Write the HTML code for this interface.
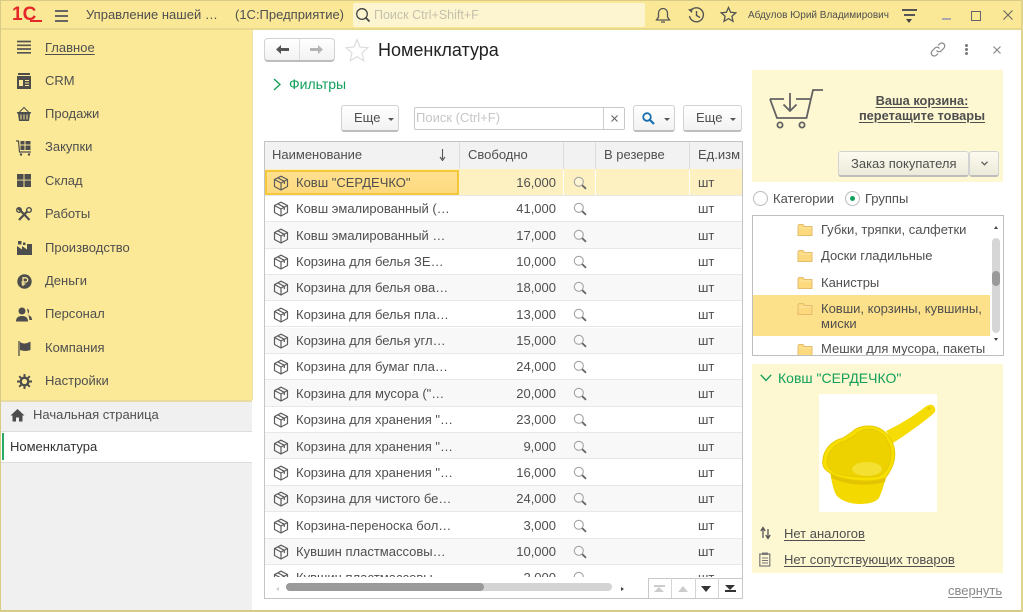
<!DOCTYPE html>
<html><head><meta charset="utf-8">
<style>
html,body{margin:0;padding:0}
body{width:1023px;height:612px;position:relative;overflow:hidden;background:#fff;font-family:"Liberation Sans",sans-serif;font-size:13px;color:#4f4f4f;filter:blur(.35px)}
div,a,span.a,svg.a{position:absolute}
.t{white-space:nowrap;line-height:16px}
.u{text-decoration:underline;text-underline-offset:2px}
.btn{background:linear-gradient(#fff,#f2f2f2);border:1px solid #d2d2d2;border-bottom:2px solid #bdbdbd;border-radius:3px;box-sizing:border-box}
.caret{width:0;height:0;border-left:3px solid transparent;border-right:3px solid transparent;border-top:3px solid #555}
.hd{top:142px;height:27px;background:#f2f2f2;border-right:1px solid #dcdcdc;box-sizing:border-box}
.r{left:265px;width:477px;height:26px;border-bottom:1px solid #e8e8e8;box-sizing:border-box}
.alt{background:#f8f8f8}
</style></head><body>
<svg width="0" height="0" style="position:absolute"><defs>
<symbol id="box" viewBox="0 0 16 16"><g fill="none" stroke="#5c5c5c" stroke-width="1.200" stroke-linejoin="round"><path d="M8 1.200 14.500 4.500V11.500L8 15 1.500 11.500V4.500Z"/><path d="M1.500 4.500 8 8 14.500 4.500M8 8V15M4.800 2.900 11.300 6.300V9"/></g></symbol>
<symbol id="lens" viewBox="0 0 14 14"><circle cx="5.800" cy="5.800" r="4.500" fill="#fff" fill-opacity=".3" stroke="#a2a2a2" stroke-width="1.100"/><path d="M9.200 9.200 13 12.800" stroke="#666" stroke-width="1.800"/></symbol>
<symbol id="fold" viewBox="0 0 16 14"><path d="M1 3V12.500H15V3.500H7.500L6 1.500H2Z" fill="#fcd97c" stroke="#e4bd6c"/><path d="M1.500 5H14.500" stroke="#fbe6a8"/></symbol>
</defs></svg>

<!-- title bar -->
<div style="left:0;top:0;width:1023px;height:30px;background:#fae896;border-bottom:2px solid #e6d88c;box-sizing:border-box"></div>
<div style="left:0;top:0;width:1023px;height:1px;background:#d8cb85"></div>
<div class="t" style="left:12px;top:5px;font-size:19px;font-weight:bold;color:#e4282a;line-height:20px">1С</div>
<div style="left:30px;top:20px;width:12px;height:2px;background:#e4282a"></div>
<div style="left:55px;top:10px;width:13px;height:1.500px;background:#666"></div>
<div style="left:55px;top:15px;width:13px;height:1.500px;background:#666"></div>
<div style="left:55px;top:20px;width:13px;height:1.500px;background:#666"></div>
<div class="t" style="left:86px;top:7px;">Управление нашей …</div>
<div class="t" style="left:235px;top:7px;">(1С:Предприятие)</div>
<div style="left:353px;top:3px;width:292px;height:24px;background:#fdf5cf;border-radius:2px"></div>
<svg class="a" style="left:355px;top:7px" width="16" height="16" viewBox="0 0 16 16"><circle cx="7" cy="7" r="5.300" fill="none" stroke="#444" stroke-width="1.300"/><path d="M11 11 14.500 14.500" stroke="#444" stroke-width="1.800"/></svg>
<div class="t" style="left:374px;top:7px;font-size:12.500px;color:#c4c0ac">Поиск Ctrl+Shift+F</div>
<svg class="a" style="left:655px;top:6px" width="16" height="18" viewBox="0 0 16 18"><path d="M1.500 14H14.500L12.500 11V7A4.500 4.500 0 0 0 3.500 7V11ZM6 16H10" fill="none" stroke="#555" stroke-width="1.300"/></svg>
<svg class="a" style="left:687px;top:6px" width="18" height="18" viewBox="0 0 18 18"><path d="M3.500 5A7 7 0 1 1 2.500 10M9.500 5V9.500L13 11.500" fill="none" stroke="#555" stroke-width="1.400"/><path d="M1 3.500 5.500 2.500 5 7Z" fill="#555"/></svg>
<svg class="a" style="left:720px;top:6px" width="17" height="17" viewBox="0 0 17 17"><path d="M8.500 1.500 10.600 6.300 15.800 6.800 11.900 10.200 13 15.300 8.500 12.600 4 15.300 5.100 10.200 1.200 6.800 6.400 6.300Z" fill="none" stroke="#555" stroke-width="1.300"/></svg>
<div class="t" style="left:748px;top:8px;font-size:10px">Абдулов Юрий Владимирович</div>
<div style="left:902px;top:9px;width:15px;height:1.500px;background:#555"></div>
<div style="left:904px;top:14px;width:11px;height:1.500px;background:#555"></div>
<div style="left:906px;top:19px;border-left:3.500px solid transparent;border-right:3.500px solid transparent;border-top:4px solid #444"></div>
<div style="left:942px;top:18px;width:9px;height:2px;background:#aaa"></div>
<div style="left:971px;top:11px;width:8px;height:8px;border:1.300px solid #666"></div>
<svg class="a" style="left:1003px;top:10px" width="10" height="10" viewBox="0 0 10 10"><path d="M.5.500 9.500 9.500M9.500.500.5 9.500" stroke="#666" stroke-width="1.100"/></svg>

<!-- sidebar -->
<div style="left:0;top:30px;width:252px;height:370px;background:#fbe998;border-right:1px solid #ece3b0"></div>
<div style="left:0;top:400px;width:252px;height:32px;background:#f0f0f0;border-top:2px solid #e8dca0;box-sizing:border-box"></div>
<div style="left:0;top:431px;width:252px;height:32px;background:#fff;border-top:1px solid #ddd;border-bottom:1px solid #ddd;box-sizing:border-box"></div>
<div style="left:0;top:463px;width:252px;height:149px;background:#f0f0f0"></div>
<div style="left:2px;top:433px;width:2px;height:27px;background:#2aa866"></div>
<div style="left:0;top:0;width:1px;height:612px;background:#d8cb85"></div>

<div class="t u" style="left:45px;top:40px">Главное</div>
<div class="t" style="left:45px;top:73px">CRM</div>
<div class="t" style="left:45px;top:106px">Продажи</div>
<div class="t" style="left:45px;top:139px">Закупки</div>
<div class="t" style="left:45px;top:173px">Склад</div>
<div class="t" style="left:45px;top:206px">Работы</div>
<div class="t" style="left:45px;top:240px">Производство</div>
<div class="t" style="left:45px;top:273px">Деньги</div>
<div class="t" style="left:45px;top:306px">Персонал</div>
<div class="t" style="left:45px;top:340px">Компания</div>
<div class="t" style="left:45px;top:373px">Настройки</div>
<div class="t" style="left:33px;top:407px">Начальная страница</div>
<div class="t" style="left:10px;top:439px;color:#333">Номенклатура</div>

<svg class="a" style="left:17px;top:40px" width="14" height="14" viewBox="0 0 14 14"><path d="M0 1.500H14M0 5.300H14M0 9H14M0 12.800H14" stroke="#555" stroke-width="1.700"/></svg>
<svg class="a" style="left:16px;top:73px" width="16" height="16" viewBox="0 0 16 16"><path d="M2 0H14V2H2Z M1 3H15V16H1Z" fill="#4d4d4d"/><rect x="3" y="7" width="4" height="6" fill="#fbe998"/><path d="M9 7.500H13M9 10H13M9 12.500H13" stroke="#fbe998"/></svg>
<svg class="a" style="left:16px;top:106px" width="16" height="16" viewBox="0 0 16 16"><path d="M1 6H15V7.500H14L13 15H3L2 7.500H1Z" fill="#4d4d4d"/><path d="M3.500 6 8 1.500 12.500 6" fill="none" stroke="#4d4d4d"/><path d="M5 8.500V13.500M8 8.500V13.500M11 8.500V13.500" stroke="#fbe998"/></svg>
<svg class="a" style="left:16px;top:140px" width="16" height="16" viewBox="0 0 16 16"><path d="M0 1H2.500L3.500 12H15" fill="none" stroke="#4d4d4d" stroke-width="1.200"/><path d="M4.500 1H8.500V4.500H4.500ZM9.500 1H14.500V4.500H9.500ZM4.500 5.500H8.500V10H4.500ZM9.500 5.500H14.500V10H9.500Z" fill="#4d4d4d"/><circle cx="5" cy="14.500" r="1.200" fill="#4d4d4d"/><circle cx="13" cy="14.500" r="1.200" fill="#4d4d4d"/></svg>
<svg class="a" style="left:17px;top:174px" width="14" height="13" viewBox="0 0 15 14"><path d="M0 0H7V6H0ZM8 0H15V6H8ZM0 7H7V14H0ZM8 7H15V14H8Z" fill="#4d4d4d"/></svg>
<svg class="a" style="left:16px;top:207px" width="16" height="15" viewBox="0 0 16 15"><path d="M2 1 13.500 13M14 1.500 3 13" stroke="#4d4d4d" stroke-width="2.200"/><circle cx="3" cy="3" r="2.300" fill="none" stroke="#4d4d4d" stroke-width="1.400"/><circle cx="13" cy="3" r="2.300" fill="#fbe998" stroke="#4d4d4d" stroke-width="1.400"/></svg>
<svg class="a" style="left:17px;top:241px" width="15" height="14" viewBox="0 0 15 14"><path d="M0 14V5L5 8.500V5L10 8.500V3H15V14ZM1 0H4.500V3.500H1ZM6 1.500H8.500V4H6Z" fill="#4d4d4d"/></svg>
<svg class="a" style="left:17px;top:274px" width="15" height="15" viewBox="0 0 15 15"><circle cx="7.500" cy="7.500" r="7.200" fill="#4d4d4d"/><path d="M6 12V3.800H8.600A2 2 0 0 1 8.600 8H4.500M4.500 10H8.500" fill="none" stroke="#fbe998" stroke-width="1.300"/></svg>
<svg class="a" style="left:16px;top:307px" width="16" height="15" viewBox="0 0 16 15"><circle cx="6" cy="4" r="3.500" fill="#4d4d4d"/><path d="M0 14.500C0 10 3 9 6 9S12 10 12 14.500Z" fill="#4d4d4d"/><path d="M11 1.500A3 3 0 0 1 11.500 7L13 8.500C15 9 16 11 16 13H13.500" fill="#4d4d4d"/></svg>
<svg class="a" style="left:18px;top:341px" width="14" height="15" viewBox="0 0 14 15"><path d="M1 0V15" stroke="#4d4d4d" stroke-width="1.300"/><path d="M2 1C5 3 8 3 12.500 0.500V9C8 10.500 5 10 2 9Z" fill="#4d4d4d"/></svg>
<svg class="a" style="left:17px;top:374px" width="15" height="15" viewBox="0 0 15 15"><circle cx="7.500" cy="7.500" r="3.800" fill="none" stroke="#4d4d4d" stroke-width="2.400"/><path d="M7.500 0V3M7.500 12V15M0 7.500H3M12 7.500H15M2.200 2.200 4.300 4.300M10.700 10.700 12.800 12.800M12.800 2.200 10.700 4.300M4.300 10.700 2.200 12.800" stroke="#4d4d4d" stroke-width="2"/></svg>
<svg class="a" style="left:10px;top:408px" width="15" height="14" viewBox="0 0 15 14"><path d="M7.500 1 14.500 7.500H12.500V13.500H9V9.500H6V13.500H2.500V7.500H0.500Z" fill="#4d4d4d"/></svg>

<!-- toolbar -->
<div class="btn" style="left:264px;top:38px;width:71px;height:24px;border-radius:4px"></div>
<div style="left:299px;top:39px;width:1px;height:21px;background:#ddd"></div>
<svg class="a" style="left:275px;top:44px" width="15" height="11" viewBox="0 0 15 11"><path d="M1 5.500 6 1V4H14V7H6V10Z" fill="#555"/></svg>
<svg class="a" style="left:309px;top:44px" width="15" height="11" viewBox="0 0 15 11"><path d="M14 5.500 9 1V4H1V7H9V10Z" fill="#b5b5b5"/></svg>
<svg class="a" style="left:345px;top:38px" width="24" height="24" viewBox="0 0 24 24"><path d="M12 1.500 15 9 23 9.700 17 15 18.800 22.800 12 18.700 5.200 22.800 7 15 1 9.700 9 9Z" fill="#fff" stroke="#dadada" stroke-width="1.100"/></svg>
<div class="t" style="left:378px;top:40px;font-size:18px;line-height:21px;color:#222">Номенклатура</div>
<svg class="a" style="left:929px;top:41px" width="18" height="17" viewBox="0 0 18 17"><path d="M7.500 9.500A3 3 0 0 0 12 10L15 7A3 3 0 0 0 10.500 3L9 4.500M10.500 7.500A3 3 0 0 0 6 7L3 10A3 3 0 0 0 7.500 14L9 12.500" fill="none" stroke="#888" stroke-width="1.200"/></svg>
<div style="left:965px;top:44px;width:3px;height:3px;background:#777;border-radius:50%"></div>
<div style="left:965px;top:48px;width:3px;height:3px;background:#777;border-radius:50%"></div>
<div style="left:965px;top:52px;width:3px;height:3px;background:#777;border-radius:50%"></div>
<svg class="a" style="left:993px;top:45.500px" width="8" height="8" viewBox="0 0 8 8"><path d="M.5.500 7.500 7.500M7.500.500.5 7.500" stroke="#888" stroke-width="1.200"/></svg>

<svg class="a" style="left:273px;top:78px" width="8" height="13" viewBox="0 0 8 13"><path d="M1 1 7 6.500 1 12" fill="none" stroke="#12a05a" stroke-width="1.400"/></svg>
<div class="t" style="left:289px;top:76px;font-size:14px;color:#12a05a">Фильтры</div>

<!-- filter row -->
<div class="btn" style="left:341px;top:105px;width:58px;height:27px"></div>
<div class="t" style="left:354px;top:110px">Еще</div><div class="caret" style="left:388px;top:118px"></div>
<div style="left:414px;top:107px;width:211px;height:23px;border:1px solid #c8c8c8;border-radius:2px;box-sizing:border-box"></div>
<div style="left:603px;top:108px;width:1px;height:21px;background:#ccc"></div>
<div class="t" style="left:416px;top:110px;color:#c5c5c5">Поиск (Ctrl+F)</div>
<svg class="a" style="left:611px;top:115px" width="7" height="7" viewBox="0 0 7 7"><path d="M.5.500 6.500 6.500M6.500.500.5 6.500" stroke="#666" stroke-width="1.100"/></svg>
<div class="btn" style="left:633px;top:105px;width:42px;height:27px"></div>
<svg class="a" style="left:642px;top:112px" width="13" height="13" viewBox="0 0 13 13"><circle cx="5" cy="5" r="3.800" fill="none" stroke="#1a6fb0" stroke-width="1.800"/><path d="M8 8 12 12" stroke="#1a6fb0" stroke-width="2.200"/></svg>
<div class="caret" style="left:664px;top:118px"></div>
<div class="btn" style="left:683px;top:105px;width:59px;height:27px"></div>
<div class="t" style="left:696px;top:110px">Еще</div><div class="caret" style="left:730px;top:118px"></div>

<!-- table -->
<div style="left:264px;top:141px;width:479px;height:458px;border:1px solid #c4c4c4;box-sizing:border-box"></div>
<div class="hd" style="left:265px;width:195px"></div>
<div class="hd" style="left:460px;width:104px"></div>
<div class="hd" style="left:564px;width:32px"></div>
<div class="hd" style="left:596px;width:94px"></div>
<div class="hd" style="left:690px;width:52px;border-right:0"></div>
<div class="t" style="left:272px;top:147px">Наименование</div>
<svg class="a" style="left:438px;top:149px" width="9" height="12" viewBox="0 0 9 12"><path d="M4.500 0V10M2 8 4.500 11.500 7 8" fill="none" stroke="#555" stroke-width="1.100"/></svg>
<div class="t" style="left:468px;top:147px">Свободно</div>
<div class="t" style="left:604px;top:147px">В резерве</div>
<div class="t" style="left:698px;top:147px">Ед.изм</div>

<div class="r" style="top:169px;height:27px;background:#fdf1c2"></div>
<div style="left:265px;top:170px;width:194px;height:25px;border:2px solid #f5c73a;background:linear-gradient(#fee08f,#fdda7e);box-sizing:border-box"></div>
<div style="left:563px;top:170px;width:1px;height:25px;background:#fff"></div>
<div style="left:595px;top:170px;width:1px;height:25px;background:#fff"></div>
<div style="left:689px;top:170px;width:1px;height:25px;background:#fff"></div>
<div class="r" style="top:196px"></div>
<div class="r alt" style="top:222px;height:27px"></div>
<div class="r" style="top:249px"></div>
<div class="r alt" style="top:275px"></div>
<div class="r" style="top:301px"></div>
<div class="r alt" style="top:328px"></div>
<div class="r" style="top:354px"></div>
<div class="r alt" style="top:380px;height:27px"></div>
<div class="r" style="top:407px"></div>
<div class="r alt" style="top:433px"></div>
<div class="r" style="top:460px"></div>
<div class="r alt" style="top:486px"></div>
<div class="r" style="top:512px;height:27px"></div>
<div class="r alt" style="top:539px"></div>

<div class="t" style="left:296px;top:175px">Ковш "СЕРДЕЧКО"</div>
<div class="t" style="left:296px;top:201px">Ковш эмалированный (…</div>
<div class="t" style="left:296px;top:228px">Ковш эмалированный …</div>
<div class="t" style="left:296px;top:254px">Корзина для белья ЗЕ…</div>
<div class="t" style="left:296px;top:280px">Корзина для белья ова…</div>
<div class="t" style="left:296px;top:307px">Корзина для белья пла…</div>
<div class="t" style="left:296px;top:333px">Корзина для белья угл…</div>
<div class="t" style="left:296px;top:359px">Корзина для бумаг пла…</div>
<div class="t" style="left:296px;top:386px">Корзина для мусора ("…</div>
<div class="t" style="left:296px;top:412px">Корзина для хранения "…</div>
<div class="t" style="left:296px;top:439px">Корзина для хранения "…</div>
<div class="t" style="left:296px;top:465px">Корзина для хранения "…</div>
<div class="t" style="left:296px;top:491px">Корзина для чистого бе…</div>
<div class="t" style="left:296px;top:518px">Корзина-переноска бол…</div>
<div class="t" style="left:296px;top:544px">Кувшин пластмассовы…</div>

<div class="t" style="left:500px;width:56px;text-align:right;top:175px">16,000</div>
<div class="t" style="left:500px;width:56px;text-align:right;top:201px">41,000</div>
<div class="t" style="left:500px;width:56px;text-align:right;top:228px">17,000</div>
<div class="t" style="left:500px;width:56px;text-align:right;top:254px">10,000</div>
<div class="t" style="left:500px;width:56px;text-align:right;top:280px">18,000</div>
<div class="t" style="left:500px;width:56px;text-align:right;top:307px">13,000</div>
<div class="t" style="left:500px;width:56px;text-align:right;top:333px">15,000</div>
<div class="t" style="left:500px;width:56px;text-align:right;top:359px">24,000</div>
<div class="t" style="left:500px;width:56px;text-align:right;top:386px">20,000</div>
<div class="t" style="left:500px;width:56px;text-align:right;top:412px">23,000</div>
<div class="t" style="left:500px;width:56px;text-align:right;top:439px">9,000</div>
<div class="t" style="left:500px;width:56px;text-align:right;top:465px">16,000</div>
<div class="t" style="left:500px;width:56px;text-align:right;top:491px">24,000</div>
<div class="t" style="left:500px;width:56px;text-align:right;top:518px">3,000</div>
<div class="t" style="left:500px;width:56px;text-align:right;top:544px">10,000</div>

<div class="t" style="left:698px;top:175px">шт</div><div class="t" style="left:698px;top:201px">шт</div><div class="t" style="left:698px;top:228px">шт</div><div class="t" style="left:698px;top:254px">шт</div><div class="t" style="left:698px;top:280px">шт</div><div class="t" style="left:698px;top:307px">шт</div><div class="t" style="left:698px;top:333px">шт</div><div class="t" style="left:698px;top:359px">шт</div><div class="t" style="left:698px;top:386px">шт</div><div class="t" style="left:698px;top:412px">шт</div><div class="t" style="left:698px;top:439px">шт</div><div class="t" style="left:698px;top:465px">шт</div><div class="t" style="left:698px;top:491px">шт</div><div class="t" style="left:698px;top:518px">шт</div><div class="t" style="left:698px;top:544px">шт</div>

<svg class="a" style="left:273px;top:175px" width="16" height="16"><use href="#box"/></svg>
<svg class="a" style="left:273px;top:201px" width="16" height="16"><use href="#box"/></svg>
<svg class="a" style="left:273px;top:228px" width="16" height="16"><use href="#box"/></svg>
<svg class="a" style="left:273px;top:254px" width="16" height="16"><use href="#box"/></svg>
<svg class="a" style="left:273px;top:280px" width="16" height="16"><use href="#box"/></svg>
<svg class="a" style="left:273px;top:307px" width="16" height="16"><use href="#box"/></svg>
<svg class="a" style="left:273px;top:333px" width="16" height="16"><use href="#box"/></svg>
<svg class="a" style="left:273px;top:359px" width="16" height="16"><use href="#box"/></svg>
<svg class="a" style="left:273px;top:386px" width="16" height="16"><use href="#box"/></svg>
<svg class="a" style="left:273px;top:412px" width="16" height="16"><use href="#box"/></svg>
<svg class="a" style="left:273px;top:439px" width="16" height="16"><use href="#box"/></svg>
<svg class="a" style="left:273px;top:465px" width="16" height="16"><use href="#box"/></svg>
<svg class="a" style="left:273px;top:491px" width="16" height="16"><use href="#box"/></svg>
<svg class="a" style="left:273px;top:518px" width="16" height="16"><use href="#box"/></svg>
<svg class="a" style="left:273px;top:544px" width="16" height="16"><use href="#box"/></svg>

<svg class="a" style="left:573px;top:176px" width="14" height="14"><use href="#lens"/></svg>
<svg class="a" style="left:573px;top:202px" width="14" height="14"><use href="#lens"/></svg>
<svg class="a" style="left:573px;top:229px" width="14" height="14"><use href="#lens"/></svg>
<svg class="a" style="left:573px;top:255px" width="14" height="14"><use href="#lens"/></svg>
<svg class="a" style="left:573px;top:281px" width="14" height="14"><use href="#lens"/></svg>
<svg class="a" style="left:573px;top:308px" width="14" height="14"><use href="#lens"/></svg>
<svg class="a" style="left:573px;top:334px" width="14" height="14"><use href="#lens"/></svg>
<svg class="a" style="left:573px;top:360px" width="14" height="14"><use href="#lens"/></svg>
<svg class="a" style="left:573px;top:387px" width="14" height="14"><use href="#lens"/></svg>
<svg class="a" style="left:573px;top:413px" width="14" height="14"><use href="#lens"/></svg>
<svg class="a" style="left:573px;top:440px" width="14" height="14"><use href="#lens"/></svg>
<svg class="a" style="left:573px;top:466px" width="14" height="14"><use href="#lens"/></svg>
<svg class="a" style="left:573px;top:492px" width="14" height="14"><use href="#lens"/></svg>
<svg class="a" style="left:573px;top:519px" width="14" height="14"><use href="#lens"/></svg>
<svg class="a" style="left:573px;top:545px" width="14" height="14"><use href="#lens"/></svg>

<!-- clipped last row -->
<div style="left:265px;top:565px;width:477px;height:12px;overflow:hidden">
<div class="t" style="left:31px;top:5px">Кувшин пластмассовы…</div>
<div class="t" style="left:235px;width:56px;text-align:right;top:5px">2,000</div>
<div class="t" style="left:433px;top:5px">шт</div>
<svg class="a" style="left:8px;top:5px" width="16" height="16"><use href="#box"/></svg>
<svg class="a" style="left:308px;top:6px" width="14" height="14"><use href="#lens"/></svg>
</div>
<div style="left:265px;top:577px;width:477px;height:21px;background:#fff"></div>

<!-- h scrollbar -->
<div style="left:276px;top:587px;border-top:2.500px solid transparent;border-bottom:2.500px solid transparent;border-right:3px solid #ccc"></div>
<div style="left:286px;top:583px;width:326px;height:8px;background:#d4d4d4;border-radius:4px"></div>
<div style="left:286px;top:583px;width:198px;height:8px;background:#9a9a9a;border-radius:4px"></div>
<div style="left:621px;top:587px;border-top:2.500px solid transparent;border-bottom:2.500px solid transparent;border-left:3px solid #444"></div>
<!-- nav arrows -->
<div style="left:648px;top:578px;width:95px;height:21px;background:#fff;border:1px solid #c8c8c8;box-sizing:border-box"></div>
<div style="left:671px;top:578px;width:1px;height:20px;background:#d5d5d5"></div>
<div style="left:695px;top:578px;width:1px;height:20px;background:#d5d5d5"></div>
<div style="left:718px;top:578px;width:1px;height:20px;background:#d5d5d5"></div>
<div style="left:654px;top:585px;width:11px;height:2px;background:#ccc"></div>
<div style="left:654px;top:587px;border-left:5.500px solid transparent;border-right:5.500px solid transparent;border-bottom:5px solid #ccc"></div>
<div style="left:678px;top:586px;border-left:5.500px solid transparent;border-right:5.500px solid transparent;border-bottom:6px solid #ccc"></div>
<div style="left:701px;top:586px;border-left:5.500px solid transparent;border-right:5.500px solid transparent;border-top:6px solid #333"></div>
<div style="left:725px;top:585px;border-left:5.500px solid transparent;border-right:5.500px solid transparent;border-top:5px solid #333"></div>
<div style="left:725px;top:590px;width:11px;height:2px;background:#333"></div>

<!-- cart panel -->
<div style="left:752px;top:70px;width:251px;height:112px;background:#fdf7d2"></div>
<svg class="a" style="left:768px;top:88px" width="58" height="44" viewBox="0 0 58 44"><g fill="none" stroke="#626262" stroke-width="1.800"><path d="M2 11H16M28 11H42M55 2H45L38.500 30H9L2 11"/><path d="M22 5V23M15.500 16.500 22 23 28.500 16.500"/><circle cx="12" cy="37" r="2.600"/><circle cx="34" cy="37" r="2.600"/></g></svg>
<div class="t u" style="left:836px;width:172px;text-align:center;top:93px;font-weight:bold;font-size:12.800px">Ваша корзина:</div>
<div class="t u" style="left:836px;width:172px;text-align:center;top:108px;font-weight:bold;font-size:12.800px">перетащите товары</div>
<div class="btn" style="left:838px;top:151px;width:131px;height:26px;background:linear-gradient(#fdfbf0,#ecead8)"></div>
<div class="t" style="left:851px;top:156px">Заказ покупателя</div>
<div class="btn" style="left:969px;top:151px;width:30px;height:26px;background:linear-gradient(#fdfbf0,#ecead8)"></div>
<svg class="a" style="left:981px;top:161px" width="7" height="5" viewBox="0 0 7 5"><path d="M.5.800 3.500 3.800 6.500.800" fill="none" stroke="#555" stroke-width="1.200"/></svg>

<!-- radios -->
<div style="left:753px;top:191px;width:15px;height:15px;border:1px solid #bbb;border-radius:50%;background:#fff;box-sizing:border-box"></div>
<div class="t" style="left:773px;top:191px">Категории</div>
<div style="left:845px;top:191px;width:15px;height:15px;border:1px solid #bbb;border-radius:50%;background:#fff;box-sizing:border-box"></div>
<div style="left:850px;top:196px;width:5px;height:5px;border-radius:50%;background:#12a05a"></div>
<div class="t" style="left:865px;top:191px">Группы</div>

<!-- tree -->
<div style="left:752px;top:215px;width:252px;height:141px;border:1px solid #bdbdbd;box-sizing:border-box;overflow:hidden;background:#fff">
<div style="left:0;top:79px;width:237px;height:41px;background:#fde08a"></div>
<svg class="a" style="left:44px;top:7px" width="16" height="14"><use href="#fold"/></svg>
<svg class="a" style="left:44px;top:33px" width="16" height="14"><use href="#fold"/></svg>
<svg class="a" style="left:44px;top:60px" width="16" height="14"><use href="#fold"/></svg>
<svg class="a" style="left:44px;top:86px" width="16" height="14"><use href="#fold"/></svg>
<svg class="a" style="left:44px;top:127px" width="16" height="14"><use href="#fold"/></svg>
<div class="t" style="left:68px;top:6px">Губки, тряпки, салфетки</div>
<div class="t" style="left:68px;top:32px">Доски гладильные</div>
<div class="t" style="left:68px;top:59px">Канистры</div>
<div class="t" style="left:68px;top:85px">Ковши, корзины, кувшины,</div>
<div class="t" style="left:68px;top:100px">миски</div>
<div class="t" style="left:68px;top:125px">Мешки для мусора, пакеты</div>
<div style="left:239px;top:22px;width:8px;height:95px;background:#d6d6d6;border-radius:4px"></div>
<div style="left:239px;top:55px;width:8px;height:15px;background:#9a9a9a;border-radius:4px"></div>
<div style="left:241px;top:10px;border-left:2.500px solid transparent;border-right:2.500px solid transparent;border-bottom:3px solid #444"></div>
<div style="left:241px;top:122px;border-left:2.500px solid transparent;border-right:2.500px solid transparent;border-top:3px solid #444"></div>
</div>

<!-- product panel -->
<div style="left:752px;top:364px;width:251px;height:209px;background:#fdf7d2"></div>
<svg class="a" style="left:760px;top:374px" width="12" height="8" viewBox="0 0 12 8"><path d="M.8.800 6 6.500 11.200.800" fill="none" stroke="#12a05a" stroke-width="1.400"/></svg>
<div class="t" style="left:778px;top:370px;font-size:14px;line-height:16px;color:#12a05a">Ковш "СЕРДЕЧКО"</div>
<svg class="a" style="left:819px;top:394px" width="118" height="118" viewBox="0 0 118 118">
<rect width="118" height="118" fill="#fff"/>
<path d="M67 37C82 30 96 21 106 13 110 10 114 10 115.500 13 117 16 116.500 18 114 20 102 30 88 40 74 49Z" fill="#f5dc05"/>
<path d="M11.500 80C13 90 15 98 18 102 24 108 33 110 41 110 50 110 57 108 60 104 63 98 65 90 67 83Z" fill="#f3d900"/>
<path d="M11.500 79C24 86 48 89 67 83L66 88C48 93 28 91 12.500 84Z" fill="#e4c400"/>
<path d="M3.700 68C4 56 12 47 24 44 27 42 30 40 33 38 38 33 44 32 50 32 60 32 68 38 72 46 77 54 77 66 72 75 70 79 68 82 66 84 55 88 44 87 34 86 26 85 17 83 11 79 6 76 3.500 73 3.700 68Z" fill="#f7e000" stroke="#e8c900" stroke-width="1"/>
<path d="M8 67C9 57 16 50 26 47 30 45 33 43 36 41 41 36 46 35 51 35 59 36 66 41 69 48 73 55 73 66 69 73 67 77 64 80 60 82 50 84 38 83 29 82 21 81 15 79 12 76 9 73 8 70 8 67Z" fill="#edd200" stroke="#e3c500" stroke-width=".8"/>
<ellipse cx="48" cy="75" rx="15" ry="7" fill="#f3e030"/>
<circle cx="110" cy="14.500" r="1.500" fill="#e2c800"/>
</svg>
<svg class="a" style="left:760px;top:526px" width="11" height="14" viewBox="0 0 11 14"><path d="M3 12V3M.8 5 3 1.500 5.200 5" fill="none" stroke="#555" stroke-width="1.300"/><path d="M8 3V12M5.800 9 8 12.500 10.200 9" fill="none" stroke="#555" stroke-width="1.300"/></svg>
<div class="t u" style="left:784px;top:526px">Нет аналогов</div>
<svg class="a" style="left:759px;top:552px" width="12" height="15" viewBox="0 0 12 15"><rect x=".8" y="2" width="10" height="12" fill="none" stroke="#777" stroke-width="1.200"/><rect x="3" y=".5" width="6" height="2.500" fill="#777"/><path d="M3 6H9M3 8.500H9M3 11H9" stroke="#777"/></svg>
<div class="t u" style="left:784px;top:552px">Нет сопутствующих товаров</div>
<div class="t u" style="left:948px;top:583px;color:#888">свернуть</div>

<!-- window frame -->
<div style="left:0;top:610px;width:1023px;height:2px;background:#d8cb85"></div>
<div style="left:1021px;top:0;width:2px;height:612px;background:#e0d48c"></div>
</body></html>
